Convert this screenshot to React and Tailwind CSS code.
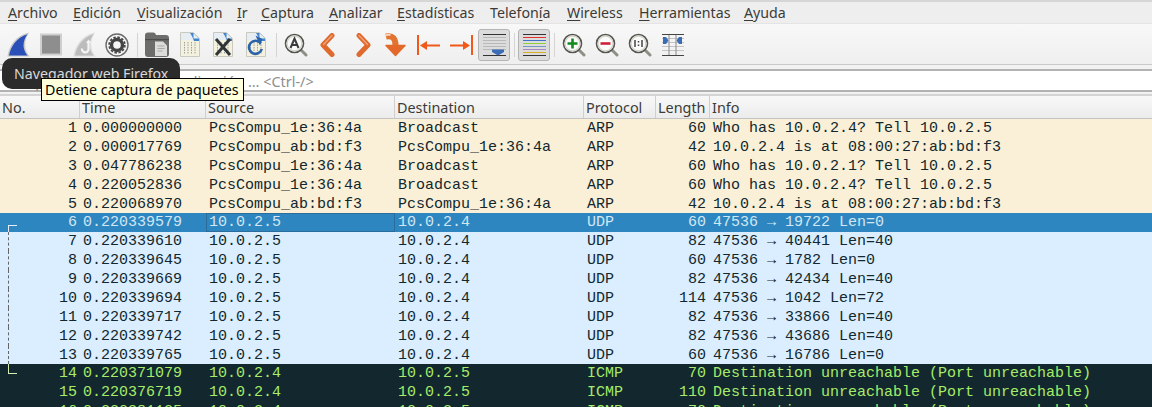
import React from "react";

const UI = { fontFamily: '"Noto Sans", "Open Sans", sans-serif' };
const MONO = { fontFamily: '"Liberation Mono", monospace' };

const menus = [
  ["", "A", "rchivo", "w-[65px]"],
  ["", "E", "dición", "w-[64px]"],
  ["", "V", "isualización", "w-[100px]"],
  ["", "I", "r", "w-[24px]"],
  ["", "C", "aptura", "w-[68px]"],
  ["", "A", "nalizar", "w-[68px]"],
  ["", "E", "stadísticas", "w-[93px]"],
  ["Telefon", "í", "a", "w-[77px]"],
  ["", "W", "ireless", "w-[72px]"],
  ["", "H", "erramientas", "w-[105px]"],
  ["", "A", "yuda", "w-[60px]"],
];

const Slot = ({ children, active }) => (
  <div className="w-[33px] h-[32px] flex items-center justify-center shrink-0">
    {active ? (
      <div className="w-[32px] h-[32px] rounded-[3px] border border-[#b4b4b4] bg-[#dcdcdc] flex items-center justify-center">{children}</div>
    ) : children}
  </div>
);
const Sep = () => (
  <div className="w-[7px] h-[32px] flex items-center justify-center shrink-0">
    <div className="w-px h-[24px] bg-[#d4d4d4]" />
  </div>
);

const S = ({ w = 24, h = 24, children }) => (
  <svg width={w} height={h} viewBox={`0 0 ${w} ${h}`} fill="none">{children}</svg>
);

const Shark = ({ fill, rim = "#c8c8c8", inner }) => (
  <S h={25}>
    <path d="M1.500 24.500C3 14 9 4 23 .500 18 8 17.500 17 23.500 24.500z" fill={rim} />
    <path d="M3 23.500C5 14.500 10 6 21.500 2.300 16.500 9 16 17 21.500 23.500z" fill={fill} />
    {inner}
  </S>
);
const Page = ({ children }) => (
  <S h={25}>
    <path d="M2.500 .500h13l6 6v18h-19z" fill="#f4f1de" stroke="#c9c9c0" />
    <path d="M3 1h12l3 4v3H3z" fill="#e6eef4" />
    <path d="M12 1h3.500l5.500 5.500V9h-5c-1-3-2-5-4-8z" fill="#3f84cc" />
    <path d="M15.500 1v5.500H21z" fill="#e8eef2" />
    <path d="M6.500 10v12M10 10v12M13.500 10v12M17 10v12" stroke="#9aa3a3" strokeDasharray="1.500 1" />
    {children}
  </S>
);
const Lens = ({ children }) => (
  <S>
    <path d="M16.500 16.500l5.500 5.500" stroke="#8f8f85" strokeWidth="3" strokeLinecap="round" />
    <circle cx="10.500" cy="10.500" r="9" fill="#fbfbfb" stroke="#55554f" strokeWidth="1.600" />
    <circle cx="10.500" cy="10.500" r="7.400" stroke="#d4d4cc" strokeWidth="1.200" />
    {children}
  </S>
);

const packets = [
  ["arp", "0.000000000", "PcsCompu_1e:36:4a", "Broadcast", "ARP", "60", "Who has 10.0.2.4? Tell 10.0.2.5"],
  ["arp", "0.000017769", "PcsCompu_ab:bd:f3", "PcsCompu_1e:36:4a", "ARP", "42", "10.0.2.4 is at 08:00:27:ab:bd:f3"],
  ["arp", "0.047786238", "PcsCompu_1e:36:4a", "Broadcast", "ARP", "60", "Who has 10.0.2.1? Tell 10.0.2.5"],
  ["arp", "0.220052836", "PcsCompu_1e:36:4a", "Broadcast", "ARP", "60", "Who has 10.0.2.4? Tell 10.0.2.5"],
  ["arp", "0.220068970", "PcsCompu_ab:bd:f3", "PcsCompu_1e:36:4a", "ARP", "42", "10.0.2.4 is at 08:00:27:ab:bd:f3"],
  ["sel", "0.220339579", "10.0.2.5", "10.0.2.4", "UDP", "60", "47536 → 19722 Len=0"],
  ["udp", "0.220339610", "10.0.2.5", "10.0.2.4", "UDP", "82", "47536 → 40441 Len=40"],
  ["udp", "0.220339645", "10.0.2.5", "10.0.2.4", "UDP", "60", "47536 → 1782 Len=0"],
  ["udp", "0.220339669", "10.0.2.5", "10.0.2.4", "UDP", "82", "47536 → 42434 Len=40"],
  ["udp", "0.220339694", "10.0.2.5", "10.0.2.4", "UDP", "114", "47536 → 1042 Len=72"],
  ["udp", "0.220339717", "10.0.2.5", "10.0.2.4", "UDP", "82", "47536 → 33866 Len=40"],
  ["udp", "0.220339742", "10.0.2.5", "10.0.2.4", "UDP", "82", "47536 → 43686 Len=40"],
  ["udp", "0.220339765", "10.0.2.5", "10.0.2.4", "UDP", "60", "47536 → 16786 Len=0"],
  ["icmp", "0.220371079", "10.0.2.4", "10.0.2.5", "ICMP", "70", "Destination unreachable (Port unreachable)"],
  ["icmp", "0.220376719", "10.0.2.4", "10.0.2.5", "ICMP", "110", "Destination unreachable (Port unreachable)"],
  ["icmp", "0.220381125", "10.0.2.4", "10.0.2.5", "ICMP", "70", "Destination unreachable (Port unreachable)"],
];

const rowClass = {
  arp: "bg-[#faf0d7] text-[#12272e]",
  udp: "bg-[#daeeff] text-[#12272e]",
  sel: "bg-[#2d86c0] text-[#d3e6f3]",
  icmp: "bg-[#12272e] text-[#a6ec68]",
};

const Bracket = ({ i }) => {
  if (i === 5) return <span className="absolute left-[8px] top-[12px] bottom-0 w-[9px] border-l border-t border-[#e6eef5]" />;
  if (i > 5 && i < 13) return <span className="absolute left-[8px] top-0 bottom-0 border-l border-dashed border-[#666]" />;
  if (i === 13) return <span className="absolute left-[8px] top-0 h-[10px] w-[9px] border-l border-b border-[#d6ecb0]" />;
  return null;
};

const heads = [
  ["No.", "w-[80px]"],
  ["Time", "w-[126px]"],
  ["Source", "w-[189px]"],
  ["Destination", "w-[189px]"],
  ["Protocol", "w-[72px]"],
  ["Length", "w-[54px]"],
  ["Info", "flex-1"],
];

export default function App() {
  return (
    <div className="relative w-[1152px] h-[407px] overflow-hidden bg-[#f2f2f2] text-[#3c3b37]" style={UI}>
      {/* menu */}
      <div className="h-[24px] bg-[#eeeeee] border-t-2 border-b border-t-[#d6d6d6] border-b-[#e4e4e4] pl-[8px] flex items-center text-[14.200px]">
        {menus.map(([pre, u, post, w], i) => (
          <div key={i} className={`${w} shrink-0 whitespace-nowrap leading-[20px]`}>
            {pre}<span className="underline underline-offset-2">{u}</span>{post}
          </div>
        ))}
      </div>
      {/* toolbar */}
      <div className="h-[41px] bg-gradient-to-b from-[#f8f8f8] to-[#efefef] border-b border-[#c9c9c9] pl-[1.500px] pt-[1px] flex items-center">
        <Slot><Shark fill="#2a4fb8" /></Slot>
        <Slot><S h={23}><rect x="2" y="1.500" width="20" height="20" fill="#8e8e8e" stroke="#cfcfcf" strokeWidth="2" /></S></Slot>
        <Slot>
          <Shark fill="#bcbcbc" rim="#dcdcdc" inner={<><path d="M16.500 9v7.500a3.300 3.300 0 1 1-6.500 0" stroke="#f4f4f4" strokeWidth="2.200" /><path d="M14 11l2.500-3.500L19 11z" fill="#f4f4f4" /></>} />
        </Slot>
        <Slot>
          <S>
            <circle cx="12" cy="12" r="11" fill="#f6f6f6" stroke="#6a6a6a" strokeWidth="1.400" />
            <circle cx="12" cy="12" r="5.500" stroke="#444" strokeWidth="3.400" />
            <circle cx="12" cy="12" r="7.800" stroke="#444" strokeWidth="1.800" strokeDasharray="2.500 1.600" />
          </S>
        </Slot>
        <Sep />
        <Slot>
          <S h={25}>
            <path d="M0 3.500a3 3 0 0 1 3-3h5.500a3 3 0 0 1 2.500 2.500h10a3 3 0 0 1 3 3v16a3 3 0 0 1-3 3H3a3 3 0 0 1-3-3z" fill="#6c6c6a" />
            <path d="M0 7h24v1.200H0z" fill="#4c4c4a" />
            <path d="M10 9.500h8l4 4V24H10z" fill="#dcdcda" />
            <path d="M12.500 14h7M12.500 16.500h7M12.500 19h5" stroke="#a9a9a9" />
          </S>
        </Slot>
        <Slot><Page /></Slot>
        <Slot>
          <Page>
            <path d="M5 7l14 16M19 7L5 23" stroke="#2f3436" strokeWidth="3" />
          </Page>
        </Slot>
        <Slot>
          <Page>
            <path d="M16.800 11.500a6.500 6.500 0 1 0 1 5.500" stroke="#2b63ab" strokeWidth="2.600" />
            <path d="M11.500 3.500l7 3.500-2.500 6.500z" fill="#2b63ab" />
          </Page>
        </Slot>
        <Sep />
        <Slot>
          <Lens>
            <path d="M6.500 15L10.500 5.500 14.500 15M8 12h5" stroke="#3c3c3c" strokeWidth="2" />
          </Lens>
        </Slot>
        <Slot>
          <S>
            <path d="M15 2.500L6 12l9 9.500" stroke="#df6a2d" strokeWidth="5" strokeLinecap="round" strokeLinejoin="round" />
            <path d="M15 2.500L6.500 11.500" stroke="#f0a27a" strokeWidth="1.400" strokeLinecap="round" />
          </S>
        </Slot>
        <Slot>
          <S>
            <path d="M9 2.500l9 9.500-9 9.500" stroke="#df6a2d" strokeWidth="5" strokeLinecap="round" strokeLinejoin="round" />
            <path d="M9 2.500l8.500 9" stroke="#f0a27a" strokeWidth="1.400" strokeLinecap="round" />
          </S>
        </Slot>
        <Slot>
          <S>
            <path d="M3 3.500c7-1.500 9.500 2.500 9.500 9" stroke="#e3742f" strokeWidth="6" />
            <path d="M2 2.500c2-1 4-1 5.500-.5" stroke="#f4d3bc" strokeWidth="2" />
            <path d="M3 12.500h19l-9.500 10z" fill="#e3692a" stroke="#e3692a" strokeWidth="1.500" strokeLinejoin="round" />
          </S>
        </Slot>
        <Slot>
          <svg width="23" height="20" viewBox="0 0 23 20" fill="none">
            <path d="M1 0v20" stroke="#f0591a" strokeWidth="2" />
            <path d="M23 10.500H7" stroke="#f0591a" strokeWidth="2" />
            <path d="M3 10.500l7-4.500v9z" fill="#f0591a" />
          </svg>
        </Slot>
        <Slot>
          <svg width="23" height="20" viewBox="0 0 23 20" fill="none">
            <path d="M22 0v20" stroke="#f0591a" strokeWidth="2" />
            <path d="M0 10.500h16" stroke="#f0591a" strokeWidth="2" />
            <path d="M20 10.500l-7-4.500v9z" fill="#f0591a" />
          </svg>
        </Slot>
        <Slot active>
          <svg width="23" height="24" viewBox="0 0 23 24" fill="none">
            <path d="M0 1.500h23" stroke="#333" />
            <path d="M0 4.500h23M0 7.500h23M0 10.500h23M0 13.500h23M0 16.500h23" stroke="#b9b9b9" />
            <path d="M0 22.500h23" stroke="#333" />
            <path d="M9 16.500h12V19l-6 3.500L9 19z" fill="#3a6db5" />
          </svg>
        </Slot>
        <Sep />
        <Slot active>
          <svg width="23" height="24" viewBox="0 0 23 24" fill="none">
            <path d="M0 1.500h23" stroke="#333" />
            <path d="M0 4.500h23" stroke="#e53030" />
            <path d="M0 7.500h23" stroke="#3f77c8" />
            <path d="M0 10.500h23" stroke="#8ed13a" />
            <path d="M0 13.500h23" stroke="#7796c6" />
            <path d="M0 16.500h23" stroke="#a58bc0" />
            <path d="M0 19.500h23" stroke="#d9ad24" />
            <path d="M0 22.500h23" stroke="#333" />
          </svg>
        </Slot>
        <Sep />
        <Slot>
          <Lens><path d="M10.500 5.500v10M5.500 10.500h10" stroke="#128a1d" strokeWidth="2.600" /></Lens>
        </Slot>
        <Slot>
          <Lens><path d="M5.500 10.500h10" stroke="#d0213c" strokeWidth="2.600" /></Lens>
        </Slot>
        <Slot>
          <Lens><path d="M7 7v7M14 7v7" stroke="#444" strokeWidth="1.500" /><path d="M10.500 8v1.500M10.500 11.500V13" stroke="#444" strokeWidth="1.500" /></Lens>
        </Slot>
        <Slot>
          <S>
            <path d="M1 1.500h22M1 22.500h22" stroke="#444" />
            <path d="M1 5.500h22M1 9.500h22M1 13.500h22M1 17.500h22" stroke="#c4c4c4" />
            <path d="M8 2v20M15 2v20" stroke="#8a8a8a" />
            <path d="M2 4h3l2.500 3.500L5 11H2zM21 4h-3l-2.500 3.500L18 11h3z" fill="#3a6db5" />
          </S>
        </Slot>
      </div>
      {/* filter */}
      <div className="mt-[4px] h-[23px] border-y-2 border-[#b3b3b3] bg-white flex items-center">
        <div className="w-full h-[19px] flex items-center pl-[4px] text-[14.400px] leading-[21px] pt-[1px] text-[#8e8e8e]">
          <span className="w-[22px] shrink-0" />
          <span className="whitespace-nowrap">Aplique un filtro de visualización … &lt;Ctrl-/&gt;</span>
        </div>
      </div>
      {/* header */}
      <div className="mt-[2px] h-[25px] flex border-t-2 border-b border-t-[#d4d4d4] border-b-[#c4c4c4] bg-gradient-to-b from-[#f8f8f8] to-[#ececec] text-[14.400px]">
        {heads.map(([t, w], i) => (
          <div key={t} className={`${w} shrink-0 h-full pl-[2px] leading-[24px] ${i < 6 ? "border-r border-[#cfcfcf]" : ""}`}>{t}</div>
        ))}
      </div>
      {/* rows */}
      <div className="text-[15px]" style={MONO}>
        {packets.map((p, i) => (
          <div key={i} className={`${rowClass[p[0]]} h-[18.875px] leading-[20px] flex whitespace-nowrap`}>
            <div className="relative w-[80px] shrink-0 pr-[3px] text-right">
              <Bracket i={i} />
              {i + 1}
            </div>
            <div className="w-[126px] shrink-0 pl-[3px]">{p[1]}</div>
            <div className={`w-[189px] shrink-0 pl-[3px] ${p[0] === "sel" ? "shadow-[inset_0_0_0_1px_#2a6c9c]" : ""}`}>{p[2]}</div>
            <div className="w-[189px] shrink-0 pl-[3px]">{p[3]}</div>
            <div className="w-[72px] shrink-0 pl-[3px]">{p[4]}</div>
            <div className="w-[54px] shrink-0 pr-[4px] text-right">{p[5]}</div>
            <div className="flex-1 pl-[3px]">{p[6]}</div>
          </div>
        ))}
      </div>
      {/* tooltips */}
      <div className="absolute left-[2px] top-[58px] w-[178px] h-[31px] rounded-[10px] bg-[#2b2b2b] text-[#d8d8d8] text-[14.200px] leading-[31px] pl-[12px] whitespace-nowrap">
        Navegador web Firefox
      </div>
      <div className="absolute left-[41px] top-[78px] w-[203px] h-[23px] border border-black bg-[#ffffdc] text-black text-[14.250px] leading-[21px] pl-[3px] whitespace-nowrap">
        Detiene captura de paquetes
      </div>
    </div>
  );
}
